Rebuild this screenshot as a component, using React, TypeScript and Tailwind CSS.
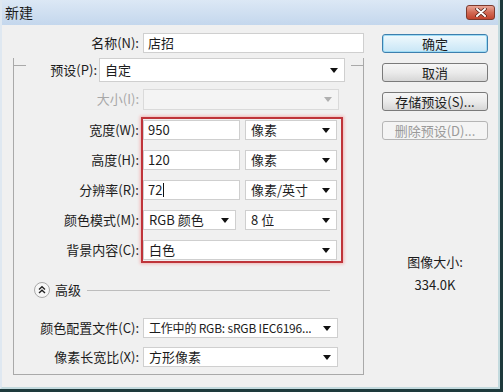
import type { ReactNode } from 'react';

const Arrow = ({ disabled }: { disabled?: boolean }) => (
  <svg width="8" height="5" viewBox="0 0 8 5" className="shrink-0">
    <path d="M0 0 H8 L4 5 Z" fill={disabled ? '#b0b0b0' : '#111'} />
  </svg>
);

const Field = ({ className = '', children }: { className?: string; children?: ReactNode }) => (
  <div className={`h-[20px] bg-white border border-[#cfcfcf] flex items-center px-[4px] text-[13px] text-[#1c1c1c] ${className}`}>
    {children}
  </div>
);

const Select = ({
  className = '',
  textClass = '',
  children,
  disabled,
}: {
  className?: string;
  textClass?: string;
  children?: ReactNode;
  disabled?: boolean;
}) => (
  <div
    className={`h-[20px] border flex items-center justify-between pl-[5px] pr-[6px] text-[13px] ${
      disabled ? 'bg-[#f4f4f4] border-[#dadada]' : 'bg-white border-[#cfcfcf] text-[#1c1c1c]'
    } ${className}`}
  >
    <span className={`whitespace-nowrap overflow-hidden ${textClass}`}>{children}</span>
    <Arrow disabled={disabled} />
  </div>
);

const Label = ({ children, gray, w = 'w-[125px]' }: { children: ReactNode; gray?: boolean; w?: string }) => (
  <div className={`${w} shrink-0 text-right text-[13px] leading-[20px] ${gray ? 'text-[#a8a8a8]' : 'text-[#1c1c1c]'}`}>
    {children}
  </div>
);

const Button = ({ children, kind }: { children: ReactNode; kind?: 'default' | 'disabled' }) => {
  const look =
    kind === 'default'
      ? 'border-[#3d7fae] bg-gradient-to-b from-[#f0f9fd] to-[#c8e6f6] text-[#1c1c1c] shadow-[inset_0_0_0_1px_#9fdcf5]'
      : kind === 'disabled'
        ? 'border-[#b5b5b5] bg-[#f4f4f4] text-[#9a9a9a]'
        : 'border-[#7a7a7a] bg-gradient-to-b from-[#f6f6f6] via-[#ebebeb] to-[#d6d6d6] text-[#1c1c1c]';
  return (
    <div className={`w-[106px] h-[19px] rounded-[3px] border flex items-center justify-center text-[13px] leading-none ${look}`}>
      {children}
    </div>
  );
};

export default function App() {
  return (
    <div className="w-[503px] h-[392px] bg-[#1e3a3c] font-['Noto_Sans_CJK_SC',sans-serif] overflow-hidden">
      <div className="w-[500px] h-[389px] bg-[#f0f0f0] flex flex-col border-r-2 border-b-2 border-[#c3dade] border-l-2 border-l-[#dfe8f1]">
        {/* title bar */}
        <div className="h-[25px] shrink-0 bg-gradient-to-b from-[#dce8f5] to-[#c4d7ed] flex items-start justify-between pl-[3px] pr-[3px]">
          <span className="text-[14px] leading-[25px] text-[#1b1b1b]">新建</span>
          <div className="mt-[5px] w-[29px] h-[15px] rounded-[3px] border border-[#7c3a2e] bg-gradient-to-b from-[#e9a596] via-[#d26a55] to-[#c2432d] flex items-center justify-center">
            <svg width="12" height="9" viewBox="0 0 12 9">
              <path d="M2 1 L10 8 M10 1 L2 8" stroke="#4a1a12" strokeWidth="3.4" strokeLinecap="round" />
              <path d="M2 1 L10 8 M10 1 L2 8" stroke="#fff" strokeWidth="2" strokeLinecap="round" />
            </svg>
          </div>
        </div>

        {/* body */}
        <div className="flex flex-1">
          <div className="w-[362px] shrink-0">
            <div className="mt-[8px] flex gap-[4px]">
              <Label w="w-[137px]">名称(N):</Label>
              <Field className="w-[223px]">店招</Field>
            </div>

            <div className="ml-[11px] mt-[12px] w-[351px] border-l border-r border-b border-[#a9a9a9] pb-[7px]">
              {/* preset row sits on the top edge of the group */}
              <div className="-mt-[7px] flex items-start">
                <div className="w-[12px] mt-[7px] border-t border-[#a9a9a9]" />
                <div className="w-[71px] text-right text-[13px] leading-[24px] text-[#1c1c1c]">预设(P):</div>
                <Select className="ml-[2px] w-[246px] h-[24px]">自定</Select>
                <div className="flex-1 ml-[6px] mt-[7px] border-t border-[#a9a9a9]" />
              </div>

              <div className="mt-[7px] flex gap-[4px]">
                <Label gray>大小(I):</Label>
                <Select disabled className="w-[196px] h-[21px]" />
              </div>

              <div className="mt-[7px] flex">
                <div className="pt-[3px] flex flex-col gap-[10px]">
                  <Label>宽度(W):</Label>
                  <Label>高度(H):</Label>
                  <Label>分辨率(R):</Label>
                  <Label>颜色模式(M):</Label>
                  <Label>背景内容(C):</Label>
                </div>
                <div className="ml-[2px] w-[202px] border-2 border-[#bf343a] shadow-[0_0_3px_1px_#f2b3b3] py-[1px] flex flex-col gap-[10px]">
                  <div className="flex gap-[5px]">
                    <Field className="w-[97px]">950</Field>
                    <Select className="w-[92px]">像素</Select>
                  </div>
                  <div className="flex gap-[5px]">
                    <Field className="w-[97px]">120</Field>
                    <Select className="w-[92px]">像素</Select>
                  </div>
                  <div className="flex gap-[5px]">
                    <Field className="w-[97px]">
                      72<span className="ml-px w-px h-[14px] bg-[#111]" />
                    </Field>
                    <Select className="w-[92px]">像素/英寸</Select>
                  </div>
                  <div className="flex gap-[9px]">
                    <Select className="w-[93px]">RGB 颜色</Select>
                    <Select className="w-[92px]">8 位</Select>
                  </div>
                  <Select className="w-[194px]">白色</Select>
                </div>
              </div>

              <div className="mt-[19px] h-[16px] flex items-center">
                <svg width="16" height="16" viewBox="0 0 16 16" className="ml-[20px] shrink-0">
                  <circle cx="8" cy="8" r="7.5" fill="#f7f7f7" stroke="#a8a8a8" />
                  <path d="M5 7.5 L8 4.8 L11 7.5 M5 11 L8 8.3 L11 11" fill="none" stroke="#222" strokeWidth="1.4" />
                </svg>
                <span className="ml-[5px] text-[13px] text-[#1c1c1c]">高级</span>
                <div className="flex-1 ml-[6px] mr-[33px] border-t border-[#bdbdbd]" />
              </div>

              <div className="mt-[20px] flex gap-[4px]">
                <Label>颜色配置文件(C):</Label>
                <Select className="w-[195px] pl-[4px]" textClass="text-[12px] tracking-[-0.2px]">
                  工作中的 RGB: sRGB IEC6196...
                </Select>
              </div>
              <div className="mt-[9px] flex gap-[4px]">
                <Label>像素长宽比(X):</Label>
                <Select className="w-[195px]">方形像素</Select>
              </div>
            </div>
          </div>

          <div className="ml-[18px] mt-[9px] flex flex-col">
            <div className="flex flex-col gap-[10px]">
              <Button kind="default">确定</Button>
              <Button>取消</Button>
              <Button>存储预设(S)...</Button>
              <Button kind="disabled">删除预设(D)...</Button>
            </div>
            <div className="mt-[112px] text-center text-[13px] leading-[20px] text-[#1c1c1c]">图像大小:</div>
            <div className="mt-[3px] text-center text-[13px] leading-[20px] text-[#1c1c1c]">334.0K</div>
          </div>
        </div>
      </div>
    </div>
  );
}
